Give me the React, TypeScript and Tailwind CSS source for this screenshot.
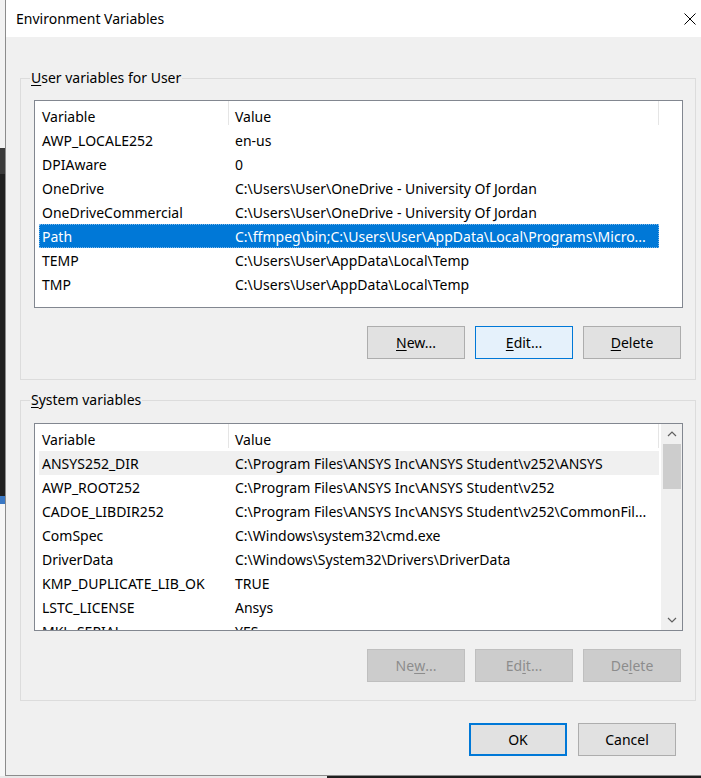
import React from "react";

type Row = [string, string];

const userVars: Row[] = [
  ["AWP_LOCALE252", "en-us"],
  ["DPIAware", "0"],
  ["OneDrive", "C:\\Users\\User\\OneDrive - University Of Jordan"],
  ["OneDriveCommercial", "C:\\Users\\User\\OneDrive - University Of Jordan"],
  ["Path", "C:\\ffmpeg\\bin;C:\\Users\\User\\AppData\\Local\\Programs\\Micro..."],
  ["TEMP", "C:\\Users\\User\\AppData\\Local\\Temp"],
  ["TMP", "C:\\Users\\User\\AppData\\Local\\Temp"],
];

const sysVars: Row[] = [
  ["ANSYS252_DIR", "C:\\Program Files\\ANSYS Inc\\ANSYS Student\\v252\\ANSYS"],
  ["AWP_ROOT252", "C:\\Program Files\\ANSYS Inc\\ANSYS Student\\v252"],
  ["CADOE_LIBDIR252", "C:\\Program Files\\ANSYS Inc\\ANSYS Student\\v252\\CommonFil..."],
  ["ComSpec", "C:\\Windows\\system32\\cmd.exe"],
  ["DriverData", "C:\\Windows\\System32\\Drivers\\DriverData"],
  ["KMP_DUPLICATE_LIB_OK", "TRUE"],
  ["LSTC_LICENSE", "Ansys"],
  ["MKL_SERIAL", "YES"],
];

function Scrollbar() {
  return (
    <div className="flex w-[21px] shrink-0 flex-col items-center bg-[#f0f0f0]">
      <div className="flex h-[20px] w-full items-center justify-center">
        <svg width="10" height="6" viewBox="0 0 10 6">
          <path d="M1 5 L5 1 L9 5" fill="none" stroke="#606060" strokeWidth="1.2" />
        </svg>
      </div>
      <div className="h-[45px] w-[18px] bg-[#cdcdcd]" />
      <div className="flex-1" />
      <div className="flex h-[20px] w-full items-center justify-center">
        <svg width="10" height="6" viewBox="0 0 10 6">
          <path d="M1 1 L5 5 L9 1" fill="none" stroke="#606060" strokeWidth="1.2" />
        </svg>
      </div>
    </div>
  );
}

function ListBox({
  rows,
  selected,
  hovered,
  scroll,
}: {
  rows: Row[];
  selected?: number;
  hovered?: number;
  scroll?: boolean;
}) {
  return (
    <div className="flex h-[208px] w-[649px] overflow-hidden border border-[#828790] bg-white">
      <div className="flex min-w-0 flex-1 flex-col">
        <div className="flex h-[27px] shrink-0 items-center pt-[3px]">
          <div className="w-[193px] pl-[7px]">Variable</div>
          <div className="h-[24px] w-px self-start -mt-[3px] bg-[#e5e5e5]" />
          <div className="w-[429px] pl-[6px]">Value</div>
          <div className="h-[24px] w-px self-start -mt-[3px] bg-[#e5e5e5]" />
        </div>
        {rows.map((r, i) => {
          const sel = i === selected;
          const hov = i === hovered;
          return (
            <div
              key={r[0]}
              className={
                "ml-[4px] flex h-[24px] w-[620px] shrink-0 items-center whitespace-nowrap " +
                (sel
                  ? "bg-[#0078d7] text-white outline-1 outline-dotted outline-[#7fb8e8] -outline-offset-1"
                  : hov
                  ? "bg-[#f0f0f0]"
                  : "")
              }
            >
              <div className="w-[189px] shrink-0 pl-[3px]">{r[0]}</div>
              <div className="min-w-0 flex-1 overflow-hidden pl-[7px]">{r[1]}</div>
            </div>
          );
        })}
      </div>
      {scroll && <Scrollbar />}
    </div>
  );
}

function Btn({
  children,
  variant = "normal",
}: {
  children: React.ReactNode;
  variant?: "normal" | "focus" | "disabled" | "default";
}) {
  const cls =
    variant === "focus"
      ? "border border-[#0078d7] bg-[#e5f1fb]"
      : variant === "disabled"
      ? "border border-[#bfbfbf] bg-[#cccccc] text-[#8c8c8c]"
      : variant === "default"
      ? "border-2 border-[#0078d7] bg-[#e1e1e1]"
      : "border border-[#adadad] bg-[#e1e1e1]";
  return (
    <div className={"flex h-[33px] w-[98px] items-center justify-center " + cls}>{children}</div>
  );
}

function GroupBox({
  label,
  children,
  className,
}: {
  label: React.ReactNode;
  children: React.ReactNode;
  className: string;
}) {
  return (
    <div className={"relative flex flex-col border border-[#dcdcdc] " + className}>
      <span className="absolute left-[9px] top-[-12px] bg-[#f0f0f0] px-px leading-[22px]">
        {label}
      </span>
      {children}
    </div>
  );
}

export default function App() {
  return (
    <div className="flex h-[778px] w-[701px] flex-col overflow-hidden bg-[#1e1e1e] font-['Noto_Sans',sans-serif] text-[14px] text-black">
      <div className="flex h-[776px]">
        {/* background window strip */}
        <div className="flex w-[5px] shrink-0 flex-col">
          <div className="h-[148px] bg-[#f2f2f2]" />
          <div className="h-[26px] bg-[#3a3a3a]" />
          <div className="h-[322px] bg-[#202020]" />
          <div className="h-[8px] bg-[#3b78c4]" />
          <div className="flex-1 bg-[#f7f7f7]" />
        </div>
        {/* dialog */}
        <div className="flex flex-1 flex-col border-b border-l border-[#8c8c8c] bg-[#f0f0f0]">
          <div className="flex h-[37px] shrink-0 items-center justify-between bg-white pl-[10px] pr-[5px]">
            <span>Environment Variables</span>
            <svg width="12" height="12" viewBox="0 0 12 12">
              <path d="M0.5 0.5 L11.5 11.5 M11.5 0.5 L0.5 11.5" stroke="#000" strokeWidth="1" />
            </svg>
          </div>
          <div className="flex flex-1 flex-col pl-[14px] pr-[5px] pt-[41px]">
            <GroupBox
              className="h-[302px] pl-[13px] pt-[21px]"
              label={
                <>
                  <span className="underline underline-offset-2">U</span>ser variables for User
                </>
              }
            >
              <ListBox rows={userVars} selected={4} />
              <div className="mt-[18px] flex gap-[10px] self-start pl-[333px]">
                <Btn>
                  <span className="underline underline-offset-2">N</span>ew...
                </Btn>
                <Btn variant="focus">
                  <span className="underline underline-offset-2">E</span>dit...
                </Btn>
                <Btn>
                  <span className="underline underline-offset-2">D</span>elete
                </Btn>
              </div>
            </GroupBox>
            <GroupBox
              className="mt-[20px] h-[301px] pl-[13px] pt-[22px]"
              label={
                <>
                  <span className="underline underline-offset-2">S</span>ystem variables
                </>
              }
            >
              <ListBox rows={sysVars} hovered={0} scroll />
              <div className="mt-[18px] flex gap-[10px] self-start pl-[333px]">
                <Btn variant="disabled">
                  Ne<span className="underline underline-offset-2">w</span>...
                </Btn>
                <Btn variant="disabled">
                  Ed<span className="underline underline-offset-2">i</span>t...
                </Btn>
                <Btn variant="disabled">
                  De<span className="underline underline-offset-2">l</span>ete
                </Btn>
              </div>
            </GroupBox>
            <div className="mt-[22px] flex gap-[11px] pl-[449px]">
              <Btn variant="default">OK</Btn>
              <Btn>Cancel</Btn>
            </div>
          </div>
        </div>
      </div>
      <div className="flex h-[2px]">
        <div className="w-[327px] bg-[#e8e8e8]" />
        <div className="flex-1 bg-[#1e1e1e]" />
      </div>
    </div>
  );
}
